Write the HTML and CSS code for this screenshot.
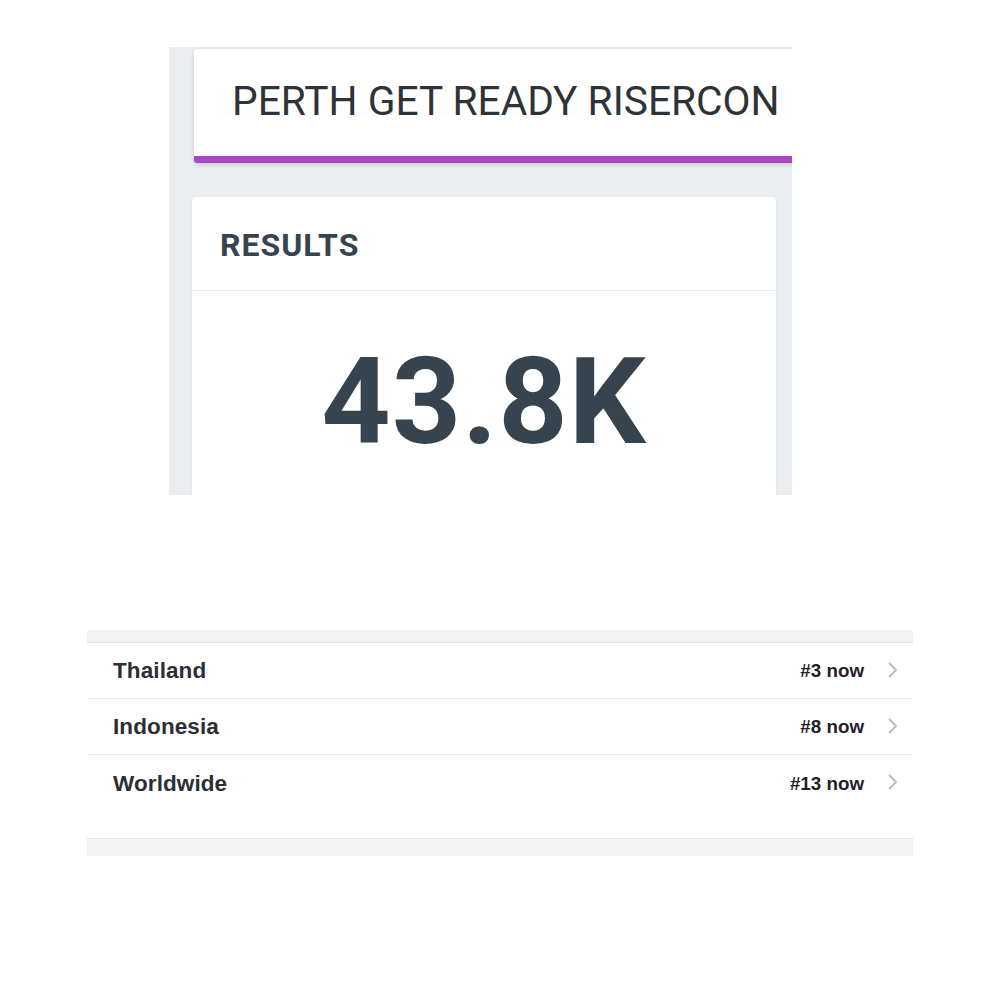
FILE: index.html
```html
<!DOCTYPE html>
<html>
<head>
<meta charset="utf-8">
<link rel="stylesheet" href="styles.css">
</head>
<body>
<section class="dash">
  <div class="title-card"><h1 class="title">PERTH GET READY RISERCON</h1></div>
  <div class="results-card">
    <div class="results-head"><h2 class="results-label">RESULTS</h2></div>
    <div class="results-body"><div class="results-value">43.8K</div></div>
  </div>
</section>

<section class="trends">
  <div class="band band-top"></div>
  <ul class="rows">
    <li class="row"><span class="place">Thailand</span><span class="rank">#3 now</span><svg class="chev" width="10" height="16" viewBox="0 0 10 16"><polyline points="1.5,1.5 8,8 1.5,14.5" fill="none" stroke="#b9b9b9" stroke-width="1.8" stroke-linecap="round" stroke-linejoin="round"/></svg></li>
    <li class="row"><span class="place">Indonesia</span><span class="rank">#8 now</span><svg class="chev" width="10" height="16" viewBox="0 0 10 16"><polyline points="1.5,1.5 8,8 1.5,14.5" fill="none" stroke="#b9b9b9" stroke-width="1.8" stroke-linecap="round" stroke-linejoin="round"/></svg></li>
    <li class="row row-last"><span class="place">Worldwide</span><span class="rank">#13 now</span><svg class="chev" width="10" height="16" viewBox="0 0 10 16"><polyline points="1.5,1.5 8,8 1.5,14.5" fill="none" stroke="#b9b9b9" stroke-width="1.8" stroke-linecap="round" stroke-linejoin="round"/></svg></li>
  </ul>
  <div class="band band-bottom"></div>
</section>
</body>
</html>
```

FILE: styles.css
```css
html, body {
  margin: 0;
  padding: 0;
  background: #ffffff;
}

.dash {
  margin: 47px 0 0 169px;
  width: 623px;
  height: 448px;
  box-sizing: border-box;
  padding: 2px 0 0 0;
  background: #ebeef1;
  overflow: hidden;
}

.title-card {
  margin-left: 25px;
  width: 640px;
  background: #ffffff;
  border-bottom: 7px solid #a64abf;
  border-radius: 3px 0 0 3px;
  box-shadow: 0 2px 4px rgba(40, 50, 60, 0.18);
  padding: 32px 0 35px 38px;
  box-sizing: border-box;
}

.title {
  margin: 0;
  font-family: Roboto, "Liberation Sans", sans-serif;
  font-weight: 400;
  font-size: 40.7px;
  line-height: 40px;
  color: #2e3338;
  white-space: nowrap;
}

.results-card {
  margin: 34px 0 0 23px;
  width: 584px;
  background: #ffffff;
  border-radius: 4px 4px 0 0;
  box-shadow: 0 1px 3px rgba(40, 50, 60, 0.08);
  height: 400px;
}

.results-head {
  padding: 32px 0 29px 28px;
  border-bottom: 1px solid #e9ebee;
}

.results-label {
  margin: 0;
  font-family: Roboto, "Liberation Sans", sans-serif;
  font-weight: 700;
  font-size: 32px;
  line-height: 32px;
  color: #36444f;
  letter-spacing: 1px;
}

.results-body {
  padding-top: 51px;
  display: flex;
  justify-content: center;
}

.results-value {
  font-family: Roboto, "Liberation Sans", sans-serif;
  font-weight: 700;
  font-size: 121px;
  line-height: 121px;
  color: #36444f;
  letter-spacing: 1px;
}

.trends {
  margin: 135px 0 0 87px;
  width: 826px;
}

.band {
  background: #f4f4f5;
}

.band-top {
  height: 12px;
  border-bottom: 1px solid #e2e2e5;
}

.band-bottom {
  height: 17px;
  border-top: 1px solid #e2e2e5;
}

.rows {
  list-style: none;
  margin: 0;
  padding: 0;
}

.row {
  display: flex;
  align-items: center;
  height: 55px;
  padding: 0 15px 0 26px;
  border-bottom: 1px solid #e6e6e8;
  font-family: "Liberation Sans", Arial, sans-serif;
  font-weight: 700;
  color: #2b2e33;
}

.row-last {
  height: 56px;
  border-bottom: none;
  margin-bottom: 27px;
}

.place {
  flex: 1;
  font-size: 22.5px;
  letter-spacing: 0.1px;
  padding-top: 1px;
}

.rank {
  font-size: 18.8px;
  color: #1f2125;
  margin-right: 24px;
  padding-top: 1px;
}

.chev {
  display: block;
  margin-top: -2px;
}
```
